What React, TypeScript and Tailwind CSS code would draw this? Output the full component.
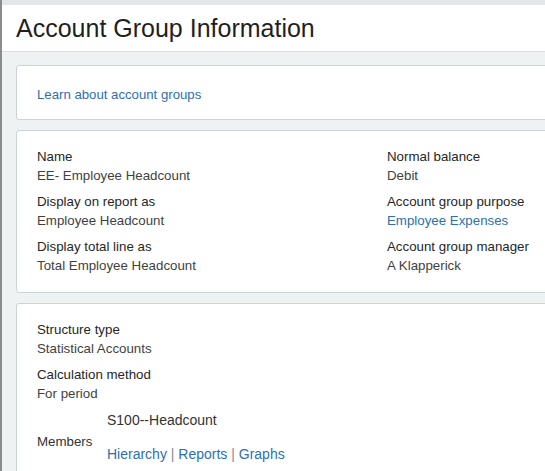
export default function App() {
  const font = { fontFamily: '"Liberation Sans", Arial, sans-serif' };

  return (
    <div
      className="min-h-[471px] w-[545px] overflow-hidden bg-[#eff2f3] border-l-2 border-[#8a8d8f]"
      style={font}
    >
      <div className="h-[5px] bg-[#e3e6e8]" />
      <div className="h-[47px] bg-white border-b border-[#dde1e3] flex items-center pl-[14px]">
        <h1 className="text-[25px] text-[#1f1f1f] leading-none">Account Group Information</h1>
      </div>

      <div className="pl-[14px] pt-[13px] flex flex-col gap-[10px] w-[580px]">
        {/* Help link */}
        <div className="bg-white border border-[#cdd3d6] rounded-[3px] h-[55px] flex items-center pl-[20px] pt-[4px]">
          <a className="text-[13.2px] text-[#2d6fae]">Learn about account groups</a>
        </div>

        {/* Details */}
        <div className="bg-white border border-[#cdd3d6] rounded-[3px] px-[20px] pt-[16px] pb-[17px] grid grid-cols-[350px_1fr] text-[13.3px] leading-[19px]">
          <div className="flex flex-col gap-[7px]">
            <Field label="Name" value="EE- Employee Headcount" />
            <Field label="Display on report as" value="Employee Headcount" />
            <Field label="Display total line as" value="Total Employee Headcount" />
          </div>
          <div className="flex flex-col gap-[7px]">
            <Field label="Normal balance" value="Debit" />
            <Field label="Account group purpose" value="Employee Expenses" link />
            <Field label="Account group manager" value="A Klapperick" />
          </div>
        </div>

        {/* Structure */}
        <div className="bg-white border border-[#cdd3d6] rounded-[3px] px-[20px] pt-[16px] pb-[20px] text-[13.3px] leading-[19px] flex flex-col gap-[7px]">
          <Field label="Structure type" value="Statistical Accounts" />
          <Field label="Calculation method" value="For period" />
          <div className="flex">
            <div className="w-[70px] pt-[22px] text-[#333]">Members</div>
            <div className="flex flex-col pt-[1px]">
              <span className="text-[14px] text-[#333] mb-[15px]">S100--Headcount</span>
              <span className="text-[14px] text-[#2d6fae]">
                Hierarchy <span className="text-[#888]">|</span> Reports{" "}
                <span className="text-[#888]">|</span> Graphs
              </span>
            </div>
          </div>
        </div>
      </div>
    </div>
  );
}

function Field({ label, value, link }: { label: string; value: string; link?: boolean }) {
  return (
    <div className="flex flex-col">
      <span className="text-[#262626]">{label}</span>
      <span className={link ? "text-[#2d6fae]" : "text-[#3f3f3f]"}>{value}</span>
    </div>
  );
}
